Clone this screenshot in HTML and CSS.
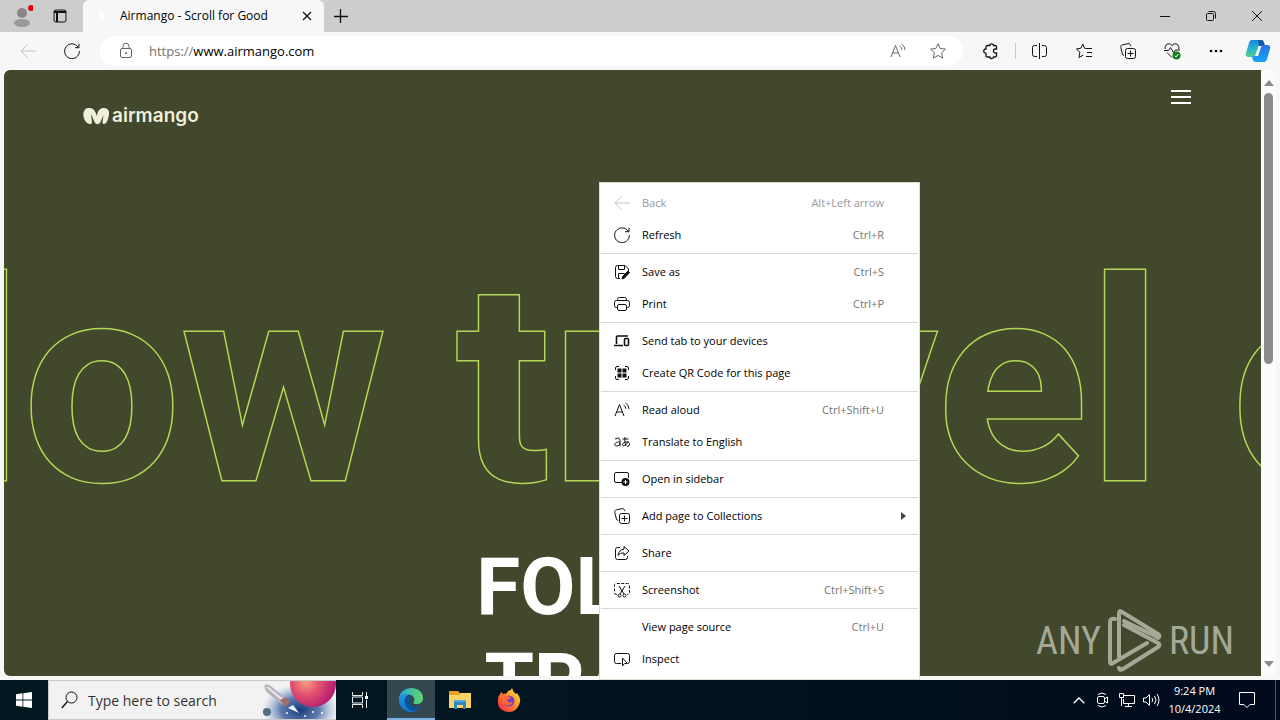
FILE: index.html
```html
<!DOCTYPE html>
<html lang="en">
<head>
<meta charset="utf-8">
<title>Airmango - Scroll for Good</title>
<link rel="stylesheet" href="styles.css">
</head>
<body>
<svg class="sprite" aria-hidden="true">
  <symbol id="back" viewBox="0 0 16 16"><path d="M7.500 1.500L1 8l6.500 6.500M1 8h15"/></symbol>
  <symbol id="refresh" viewBox="0 0 16 16"><path d="M14.2 4.2A7.4 7.4 0 1 0 15.4 8M15 .8v3.900h-4"/></symbol>
  <symbol id="aloud" viewBox="0 0 16 16"><path d="M1 14L5.500 2.500 10 14M2.600 10h5.800M9.500 3a4 4 0 0 1 2.300 3.800M11.500 1a7 7 0 0 1 3.500 6"/></symbol>
  <symbol id="collect" viewBox="0 0 16 16"><rect x="5.500" y="5.500" width="10" height="10" rx="2"/><path d="M10.500 7.500v6M7.500 10.500h6M4 12.500C3 12.300 2.600 11.700 2.400 11L.8 4.500C.5 3 1 2.300 2.300 1.900L8 .7c1.300-.3 2.200.2 2.600 1.600l.2.900"/></symbol>
</svg>

<header class="tabstrip">
  <button class="strip-btn" aria-label="Profile"><svg width="22" height="26" viewBox="0 0 22 26"><circle cx="11" cy="10" r="5" fill="#8b8785"/><ellipse cx="11" cy="20" rx="8" ry="4" fill="#9b9896"/><circle cx="20" cy="5" r="3" fill="#e3000b"/></svg></button>
  <button class="strip-btn tab-actions" aria-label="Tab actions"><svg class="ico" width="14" height="14" viewBox="0 0 14 14"><rect x="1" y="1" width="12" height="12" rx="2"/><path d="M1 3h12M4 3v10" stroke-width="2"/></svg></button>
  <div class="tab">
    <svg class="favicon" width="16" height="16" viewBox="0 0 16 16"><path d="M4 3c4 0 6 3 4 9-3 0-4-4-4-9z" fill="#fff"/></svg>
    <span class="tab-title">Airmango - Scroll for Good</span>
    <button class="tab-close" aria-label="Close tab"><svg class="ico" width="8" height="8" viewBox="0 0 8 8"><path d="M0 0l8 8M8 0L0 8" stroke-width="1.300"/></svg></button>
  </div>
  <button class="new-tab" aria-label="New tab"><svg class="ico" width="14" height="14" viewBox="0 0 14 14"><path d="M6.500 0v14M0 7.500h14" stroke-width="1.300"/></svg></button>
  <div class="window-controls">
    <button aria-label="Minimize"><svg class="ico" width="10" height="10" viewBox="0 0 10 10"><path d="M0 5.500h10"/></svg></button>
    <button aria-label="Restore"><svg class="ico" width="10" height="10" viewBox="0 0 10 10"><rect x=".5" y="2.500" width="7" height="7" rx="1"/><path d="M2.500 .5h5q2 0 2 2v5"/></svg></button>
    <button aria-label="Close"><svg class="ico" width="10" height="10" viewBox="0 0 10 10"><path d="M0 0l10 10M10 0L0 10"/></svg></button>
  </div>
</header>

<nav class="toolbar">
  <button class="tool" aria-label="Back" disabled><svg class="ico" width="16" height="16"><use href="#back"/></svg></button>
  <button class="tool" aria-label="Refresh"><svg class="ico" width="16" height="16"><use href="#refresh"/></svg></button>
  <div class="address">
    <svg class="ico soft" width="16" height="16" viewBox="0 0 16 16"><rect x="2.500" y="5.500" width="11" height="9" rx="1.500"/><path d="M5 5.500V3.500a3 3.300 0 0 1 6 0v2"/><circle cx="8" cy="10" r=".6" fill="#555"/></svg>
    <label class="scheme" for="url">https://</label>
    <input id="url" type="text" value="www.airmango.com">
    <button aria-label="Read aloud"><svg class="ico soft" width="16" height="16"><use href="#aloud"/></svg></button>
    <button aria-label="Add to favorites"><svg class="ico soft" width="16" height="16" viewBox="0 0 16 16"><path d="M8 .8l2.200 4.700 5.200.6-3.800 3.600 1 5.300L8 12.500 3.400 15l1-5.300L.6 6.100l5.200-.6z"/></svg></button>
  </div>
  <button class="tool" aria-label="Extensions"><svg class="ico" width="16" height="16" viewBox="0 0 16 16"><path d="M4.500 2.500h2.300C6.500.2 10.700.2 10.500 2.500h1.500q1.500 0 1.500 1.500V6h-1.300c-2.300 0-2.300 3.800 0 3.800h1.300V12.500q0 1.500-1.500 1.500h-1.500c0 2-3.700 2-3.700 0H4.500Q3 14 3 12.500v-2.200c-3-.3-3-4.300 0-4.300V4q0-1.500 1.500-1.500z" stroke-width="1.300"/></svg></button>
  <span class="divider"></span>
  <button class="tool" aria-label="Split screen"><svg class="ico" width="16" height="16" viewBox="0 0 16 16"><path d="M7.500 0v16M5 2.500H2.500q-2 0-2 2v7q0 2 2 2H5M10 2.500h2.500q2 0 2 2v7q0 2-2 2H10"/></svg></button>
  <button class="tool" aria-label="Favorites"><svg class="ico" width="16" height="16" viewBox="0 0 16 16"><path d="M9.800 5.500h6.200M11 9.500h5M10 13.500h6M9.800 5.500L8.500 5.200 6.800 1 4.900 5.200.5 5.900l3.300 3.300L3 14.500l4.300-2.400"/></svg></button>
  <button class="tool" aria-label="Collections"><svg class="ico" width="16" height="16"><use href="#collect"/></svg></button>
  <button class="tool" aria-label="Browser essentials"><svg class="ico" width="16" height="18" viewBox="0 0 16 18"><path d="M1.300 7C0 3 4.600-.3 8 3.500 11.400-.3 16 3 14.700 7M0 8.500h4.500l2-3 3 5 2-2.500H16M3 10.500l5 5"/><circle cx="12.500" cy="13.500" r="4" fill="#16801c" stroke="none"/><path d="M10.800 13.800l1.200 1.200 2.300-3" stroke="#fff"/></svg></button>
  <button class="tool" aria-label="Settings and more"><svg width="14" height="4" viewBox="0 0 14 4"><circle cx="2" cy="2" r="1.300"/><circle cx="7" cy="2" r="1.300"/><circle cx="12" cy="2" r="1.300"/></svg></button>
  <button class="tool copilot" aria-label="Copilot"><svg width="26" height="24" viewBox="0 0 26 24">
    <defs><linearGradient id="cpa" x1="0" y1="0" x2="0" y2="1"><stop offset="0" stop-color="#1187dc"/><stop offset=".5" stop-color="#28b4d2"/><stop offset="1" stop-color="#55cf87"/></linearGradient><linearGradient id="cpb" x1="0" y1="0" x2="0" y2="1"><stop offset="0" stop-color="#2b70e8"/><stop offset="1" stop-color="#18a5f4"/></linearGradient></defs>
    <path d="M7 1h9c2 0 2.500 1 3 3l1 3h-4c-2 0-2.500 1-3 3l-1.500 5c-.6 2-1.500 3-3.500 3H4c-3 0-3.500-2-3-4L4 4c.5-2 1.500-3 3-3z" fill="url(#cpa)"/>
    <path d="M13 1h3c2 0 2.500 1 3 3l1 3h-6z" fill="#1757a5"/>
    <path d="M19 23h-8c-2 0-3-1-3.500-3L7 17h3c2 0 2.500-1 3-3l1.500-5c.6-2 1.500-3 3.500-3h4c3 0 3.500 2 3 4l-3 10c-.5 2-1.500 3-3 3z" fill="url(#cpb)"/>
    <path d="M13.500 7h3l-3.500 10h-3z" fill="#f3f8fc"/></svg></button>
</nav>

<main class="window">
  <div class="page">
    <div class="page-head">
      <a class="logo" href="#"><svg width="26" height="18" viewBox="0 0 26 18"><path d="M4 16C-1 12-1 2 5 1c4-.5 6 1 7.500 4.500L14 9c.5-4 2-7.500 6-8 6-.3 7 4 5.500 9-.5 2.500-1.500 5-3 6.500-2 1-3.300.3-3-1.500l1-7-3.500 8c-1.500 1.500-4 1.500-5 0L8 7l1 8.500C9 17.500 6 17.500 4 16z" fill="#f0efdc"/></svg><span>airmango</span></a>
      <button class="burger" aria-label="Menu"><i></i><i></i><i></i></button>
    </div>
    <div class="marquee">slow travel c</div>
    <h1 class="headline">FOLLOW<br>TRAVEL</h1>
    <div class="watermark"><span>ANY</span><svg width="56" height="64" viewBox="0 0 56 64"><path d="M12 48V4q0-3 3-1l36 22q3 2 0 4l-3-2L17 12M8 10Q3 9 3 13v40q0 3 3 1l34-20M12 59q1 3 4 1l35-22q3-2 0-4L17 16" fill="none" stroke="#a4a997" stroke-width="4" stroke-linecap="round" stroke-linejoin="round"/></svg><span>RUN</span></div>
  </div>
  <div class="scrollbar">
    <svg width="10" height="6" viewBox="0 0 10 6"><path d="M5 0l5 6H0z"/></svg>
    <div class="thumb"></div>
    <svg width="10" height="6" viewBox="0 0 10 6"><path d="M0 0h10L5 6z"/></svg>
  </div>
</main>

<div class="menu" role="menu">
  <button role="menuitem" disabled><svg class="ico" width="16" height="16"><use href="#back"/></svg><span>Back</span><kbd>Alt+Left arrow</kbd></button>
  <button role="menuitem"><svg class="ico" width="16" height="16"><use href="#refresh"/></svg><span>Refresh</span><kbd>Ctrl+R</kbd></button>
  <hr>
  <button role="menuitem"><svg class="ico" width="16" height="16" viewBox="0 0 16 16"><path d="M6 14.500H3.500q-2 0-2-2v-9q0-2 2-2H11l3.500 3.500v2M4.500 1.500v4h6v-4M4.500 14.500v-5h6"/><path d="M8 15l1-3 5-5 1.500 1.500-5 5.500z" fill="#111"/></svg><span>Save as</span><kbd>Ctrl+S</kbd></button>
  <button role="menuitem"><svg class="ico" width="16" height="16" viewBox="0 0 16 16"><path d="M3.500 4.500v-1q0-2 2-2h5q2 0 2 2v1M3.500 11.500h-1q-2 0-2-2v-3q0-2 2-2h11q2 0 2 2v3q0 2-2 2h-1"/><rect x="3.500" y="8.500" width="9" height="6" rx="1.500"/></svg><span>Print</span><kbd>Ctrl+P</kbd></button>
  <hr>
  <button role="menuitem"><svg class="ico" width="16" height="16" viewBox="0 0 16 16"><path d="M2.500 11V4q0-1 1-1H14M0 12.500h9" stroke-width="1.600"/><rect x="10.500" y="5.500" width="4" height="7" rx="1" stroke-width="1.600"/></svg><span>Send tab to your devices</span></button>
  <button role="menuitem"><svg class="ico" width="16" height="16" viewBox="0 0 16 16"><path d="M1.500 5V3q0-1.500 1.500-1.500h2M11 1.500h2q1.500 0 1.500 1.500v2M14.500 11v2q0 1.500-1.500 1.500h-2M5 14.500H3q-1.500 0-1.500-1.500v-2"/><path d="M3.500 3.500h4v4h-4zM8.500 3.500h4v4h-4zM3.500 8.500h4v4h-4zM8.500 8.500h4v4h-4z" fill="#111" stroke="none"/></svg><span>Create QR Code for this page</span></button>
  <hr>
  <button role="menuitem"><svg class="ico" width="16" height="16"><use href="#aloud"/></svg><span>Read aloud</span><kbd>Ctrl+Shift+U</kbd></button>
  <button role="menuitem"><svg class="ico" width="16" height="16" viewBox="0 0 16 16"><path d="M1 5q5-2.500 5 1.500V12M6 8C0 7.500-.5 12 2.500 12 4.500 12 6 11 6 9M8.500 5h6M11 3c-.5 4 0 7 1 9M14 7c-1 4-5 6-5.500 4-.5-3 7-4.500 7-1 0 1.500-1 2.500-2.500 2.500"/></svg><span>Translate to English</span></button>
  <hr>
  <button role="menuitem"><svg class="ico" width="16" height="16" viewBox="0 0 16 16"><path d="M7 11.500H2q-1.500 0-1.500-1.500V3q0-1.500 1.500-1.500h11q1.500 0 1.500 1.500v4M10.500 11.500H7M14.500 7"/><circle cx="11.500" cy="11" r="4" fill="#111" stroke="none"/><path d="M11.500 9v4M9.500 11h4" stroke="#fff"/></svg><span>Open in sidebar</span></button>
  <hr>
  <button role="menuitem"><svg class="ico" width="16" height="16"><use href="#collect"/></svg><span>Add page to Collections</span><svg class="more" width="5" height="8" viewBox="0 0 5 8"><path d="M0 0l5 4-5 4z" fill="#444"/></svg></button>
  <hr>
  <button role="menuitem"><svg class="ico" width="16" height="16" viewBox="0 0 16 16"><path d="M6 2.500H3.500q-2 0-2 2v8q0 2 2 2h8q2 0 2-2V11M10 1.500L15 6l-5 4.500V8C7 8 5.500 8.500 4 10.500 4.500 6.500 7 4.500 10 4z"/></svg><span>Share</span></button>
  <hr>
  <button role="menuitem"><svg class="ico" width="16" height="16" viewBox="0 0 16 16"><path d="M3 12.500h-.5q-2 0-2-2v-7q0-2 2-2h11q2 0 2 2v7q0 2-2 2H13" stroke-dasharray="3 1.500"/><path d="M5 4l5 8M11 4l-5 8"/><circle cx="5.500" cy="13.500" r="1.500"/><circle cx="10.500" cy="13.500" r="1.500"/></svg><span>Screenshot</span><kbd>Ctrl+Shift+S</kbd></button>
  <hr>
  <button role="menuitem"><svg class="ico" width="16" height="16"></svg><span>View page source</span><kbd>Ctrl+U</kbd></button>
  <button role="menuitem"><svg class="ico" width="16" height="16" viewBox="0 0 16 16"><path d="M7 12.500H2.500q-2 0-2-2v-6q0-2 2-2h11q2 0 2 2v6q0 1.500-1.500 2M8.500 7v8l2-2.500h3z"/></svg><span>Inspect</span></button>
</div>

<footer class="taskbar">
  <button class="start" aria-label="Start"><svg width="16" height="16" viewBox="0 0 16 16" fill="#fff"><path d="M0 2.300L6.500 1.300v6.300H0zM7.300 1.200L16 0v7.600H7.300zM0 8.400h6.500v6.300L0 13.800zM7.300 8.400H16V16l-8.700-1.200z"/></svg></button>
  <div class="search">
    <svg class="ico" width="18" height="18" viewBox="0 0 18 18"><circle cx="10.500" cy="6.500" r="5.500"/><path d="M6.500 10.500L.8 17" stroke-width="1.300"/></svg>
    <input type="text" placeholder="Type here to search" aria-label="Type here to search">
    <svg class="art" width="76" height="38" viewBox="0 0 76 38">
      <defs><radialGradient id="neb"><stop offset="0" stop-color="#173b78"/><stop offset=".5" stop-color="#4265a0" stop-opacity=".85"/><stop offset="1" stop-color="#90a9d5" stop-opacity="0"/></radialGradient><radialGradient id="planet" cx=".35" cy=".45" r=".75"><stop offset="0" stop-color="#f8a082"/><stop offset=".4" stop-color="#e2506f"/><stop offset="1" stop-color="#a50b72"/></radialGradient></defs>
      <ellipse cx="40" cy="29" rx="38" ry="26" fill="url(#neb)"/>
      <circle cx="53" cy="3" r="23" fill="url(#planet)"/>
      <path d="M5 4q2-2 7 2l15 12-4 6L9 13Q3 8 5 4z" fill="#b9b0bd"/><path d="M7 6l17 14" stroke="#efe9ec" stroke-width="2"/><path d="M20 19l6-3 4 5-5 5z" fill="#9d6f6c"/><path d="M28 27l5-3 6 8z" fill="#e5f5ff"/>
      <circle cx="7" cy="31" r="4" fill="#526e82"/><g fill="#fff"><circle cx="27" cy="32" r="1"/><circle cx="53" cy="31" r="1"/><circle cx="62" cy="32" r="1"/><circle cx="45" cy="35" r="1"/></g>
    </svg>
  </div>
  <div class="apps">
    <button aria-label="Task view"><svg width="18" height="16" viewBox="0 0 18 16" fill="none" stroke="#e8eef2"><path d="M1.500 0v3.500h10V0M1.500 16v-3.500h10V16M1.500 5v6h10V5zM15.500 0v4M15.500 8v8"/><path d="M14 4h3v3h-3z" fill="#fff" stroke="none"/></svg></button>
    <button class="active" aria-label="Microsoft Edge"><svg width="24" height="24" viewBox="0 0 24 24">
      <defs><linearGradient id="ed" x1="0" y1="0" x2="1" y2="0"><stop offset="0" stop-color="#22a7df"/><stop offset="1" stop-color="#62d865"/></linearGradient><linearGradient id="ee" x1="0" y1="0" x2="0" y2="1"><stop offset="0" stop-color="#2095e4"/><stop offset="1" stop-color="#0878d6"/></linearGradient></defs>
      <path d="M0 11C1-4 24-3 24 10c0 4-3 6-6 6-4 0-4-1-3-3 2-4-4-8-9-6-3 1-5 2-6 4z" fill="url(#ed)"/><path d="M0 12c0-5 5-7 10-5-4 1-6 6-3 11 3 6 9 5 13 2-2 3-6 4-8 4C5 24 0 18 0 12z" fill="url(#ee)"/><path d="M10 7c-5 3-5 15 4 16 3 0 6-3 8-5-5 3-12 0-12-5 0-2 1-3 2-4z" fill="#07539c"/></svg></button>
    <button aria-label="File Explorer"><svg width="22" height="18" viewBox="0 0 22 18"><path d="M0 0h9l2 2h10v4H0z" fill="#e9a11b"/><path d="M0 4h10l2-2h10v15H0z" fill="#fbd568"/><path d="M5 9h12v9h-3v-4H8v4H5z" fill="#3186c8"/><path d="M5 9h12v2H5z" fill="#57a8df"/></svg></button>
    <button aria-label="Firefox"><svg width="24" height="24" viewBox="0 0 24 24">
      <defs><linearGradient id="ff" x1="1" y1="0" x2="0" y2="1"><stop offset="0" stop-color="#fff14a"/><stop offset=".45" stop-color="#ff9423"/><stop offset="1" stop-color="#ed174f"/></linearGradient></defs>
      <path d="M4 4l2 2q2-1 3 0 2-4 5-4 0-1 1-2 1 4 4 6l1-1q4 5 3 9c-2 7-6 10-11 10C5 24 0 19 1 12c0-4 2-5 3-8z" fill="url(#ff)"/><circle cx="12" cy="13" r="5.500" fill="#7441c6"/><path d="M3 7q4-2 6 1l5 1q-1 2-4 3c0 3 4 3 6 2-2 5-10 4-11-2z" fill="#ff6d34"/></svg></button>
  </div>
  <div class="tray">
    <button aria-label="Show hidden icons"><svg width="12" height="7" viewBox="0 0 12 7"><path d="M.7 6.300L6 1l5.300 5.300" stroke-width="1.300"/></svg></button>
    <button aria-label="Meet now"><svg width="14" height="16" viewBox="0 0 14 16"><rect x="1.500" y="4.500" width="7" height="7" rx="1.500"/><path d="M8.500 7l3-2v6l-3-2M2 2.500q4-3 8 0M2 13.500q4 3 8 0"/></svg></button>
    <button aria-label="Network"><svg width="16" height="14" viewBox="0 0 16 14"><path d="M5 2.500h10.500v8H4.500V6M9.500 10.500v3M6 13.500h7M.5 .5h4v4h-4zM2.500 4.500V13"/></svg></button>
    <button aria-label="Volume"><svg width="17" height="14" viewBox="0 0 17 14"><path d="M.5 5v4h2.500l3.500 3.500v-11L3 5zM9 5q1.500 2 0 4M11.500 3q3 4 0 8M14 1q4 6 0 12"/></svg></button>
    <div class="clock"><span>9:24 PM</span><span>10/4/2024</span></div>
    <button class="notify" aria-label="Notifications"><svg width="16" height="16" viewBox="0 0 16 16"><path d="M.5 .5h15v12H11l-3 3-3-3H.5z"/></svg></button>
    <span class="peek"></span>
  </div>
</footer>
</body>
</html>
```

FILE: styles.css
```css
* { box-sizing: border-box; }
body {
  margin: 0;
  height: 100vh;
  display: flex;
  flex-direction: column;
  overflow: hidden;
  position: relative;
  background: #f7f7f7;
  color: #000;
  font-family: "Open Sans", "Noto Sans", sans-serif;
  font-size: 11px;
}
button, input {
  font: inherit;
  color: inherit;
  border: 0;
  padding: 0;
  background: none;
  outline: 0;
}
button {
  display: flex;
  align-items: center;
  justify-content: center;
  flex: none;
}
svg { flex: none; display: block; }
.sprite { position: absolute; width: 0; height: 0; }
.ico { fill: none; stroke: #111; stroke-width: 1; overflow: visible; }
.soft { stroke: #666; }

/* Tab strip */
.tabstrip { display: flex; height: 32px; flex: none; background: #cdcdcd; }
.strip-btn { width: 44px; }
.tab-actions { width: 32px; margin-right: 7px; }
.tab {
  width: 241px;
  display: flex;
  align-items: center;
  padding: 0 12px;
  background: #f7f7f7;
  border-radius: 6px 6px 0 0;
}
.favicon { margin-right: 9px; }
.tab-title { flex: 1; white-space: nowrap; font-size: 12px; padding-bottom: 2px; }
.tab-close { width: 10px; height: 32px; }
.new-tab { width: 33px; }
.window-controls { display: flex; margin-left: auto; }
.window-controls button { width: 46px; }

/* Toolbar */
.toolbar {
  display: flex;
  align-items: center;
  flex: none;
  height: 38px;
  padding: 0 2px 0 6px;
}
.tool { width: 44px; height: 32px; }
.tool:disabled .ico { stroke: #c4c4c4; }
.copilot { width: 40px; }
.address {
  flex: 1;
  display: flex;
  align-items: center;
  height: 30px;
  margin: 0 6px;
  padding: 0 5px 0 18px;
  background: #fff;
  border-radius: 15px;
  font-size: 13px;
}
.address button { width: 40px; height: 30px; }
.address input { flex: 1; min-width: 0; }
.scheme { margin-left: 15px; color: #737373; }
.divider { width: 1px; height: 16px; margin: 0 2px; background: #c8c8c8; }

/* Page */
.window { flex: 1; min-height: 0; display: flex; padding: 0 4px 4px; }
.page {
  flex: 1;
  min-width: 0;
  overflow: hidden;
  position: relative;
  background: #41482b;
  border-radius: 6px 0 0 6px;
  font-family: Roboto, sans-serif;
}
.page-head {
  display: flex;
  justify-content: space-between;
  align-items: flex-start;
  height: 134px;
  padding: 20px 70px 0 79px;
}
.logo {
  display: flex;
  align-items: center;
  gap: 3px;
  margin-top: 14px;
  color: #f0efdc;
  font: 600 19px/24px Inter, sans-serif;
  text-decoration: none;
}
.burger { display: flex; flex-direction: column; gap: 4px; width: 20px; }
.burger i { width: 20px; height: 2px; background: #fff; }
.marquee {
  margin-left: -199px;
  white-space: nowrap;
  font-size: 280px;
  font-weight: 700;
  line-height: 360px;
  color: #41482b;
  paint-order: stroke fill;
  -webkit-text-stroke: 3px #b3d757;
}
.headline {
  margin: -25px 0 0;
  padding-right: 4px;
  text-align: center;
  color: #fff;
  font-size: 80px;
  font-weight: 700;
  line-height: 96px;
}
.watermark {
  position: absolute;
  right: 27px;
  bottom: 3px;
  display: flex;
  align-items: center;
  gap: 6px;
  color: #a4a997;
  font: 38px/64px "Liberation Sans Narrow", "Roboto Condensed", sans-serif;
}
.scrollbar {
  width: 15px;
  display: flex;
  flex-direction: column;
  align-items: center;
  gap: 7px;
  padding: 10px 0 9px;
  background: #fcfcfc;
  border-radius: 0 6px 6px 0;
  fill: #8b8b8b;
}
.thumb { width: 9px; height: 271px; margin-bottom: auto; border-radius: 5px; background: #8b8b8b; }

/* Context menu */
.menu {
  position: absolute;
  left: 599px;
  top: 182px;
  width: 321px;
  padding: 4px 0;
  background: #fff;
  border: 1px solid #dcdccf;
}
.menu button {
  width: 100%;
  height: 32px;
  gap: 12px;
  padding: 0 35px 0 14px;
  justify-content: flex-start;
}
.menu span, .menu kbd { padding-bottom: 2px; }
.menu kbd { margin-left: auto; font: inherit; color: #757575; }
.menu button:disabled { color: #999; }
.menu button:disabled .ico { stroke: #c4c4c4; }
.menu button:disabled kbd { color: #999; }
.menu hr { height: 1px; margin: 2px 1px; border: 0; background: #d9d9d9; }
.more { margin-left: auto; margin-right: -22px; }

/* Taskbar */
.taskbar {
  display: flex;
  flex: none;
  height: 40px;
  background: linear-gradient(90deg, #011821, #021420 50%, #020a1d);
  color: #fff;
}
.start { width: 48px; }
.search {
  width: 288px;
  display: flex;
  align-items: center;
  gap: 9px;
  padding-left: 12px;
  background: #f2f2f2;
  border: 1px solid #c9c9c9;
  border-right: 0;
}
.search input { flex: 1; min-width: 0; font-size: 14px; }
.search input::placeholder { color: #333; opacity: 1; }
.apps { display: flex; gap: 1px; }
.apps button { width: 48px; }
.apps button:first-child { width: 50px; padding-right: 2px; }
.apps .active { background: #344850; border-bottom: 2px solid #76b3e3; padding-top: 2px; }
.tray { display: flex; margin-left: auto; fill: none; stroke: #fff; }
.tray button { width: 24px; }
.tray .notify { width: 42px; }
.clock {
  width: 63px;
  display: flex;
  flex-direction: column;
  align-items: center;
  justify-content: center;
  line-height: 18px;
}
.peek { width: 5px; border-left: 1px solid #4a5364; margin-left: 7px; }
```
